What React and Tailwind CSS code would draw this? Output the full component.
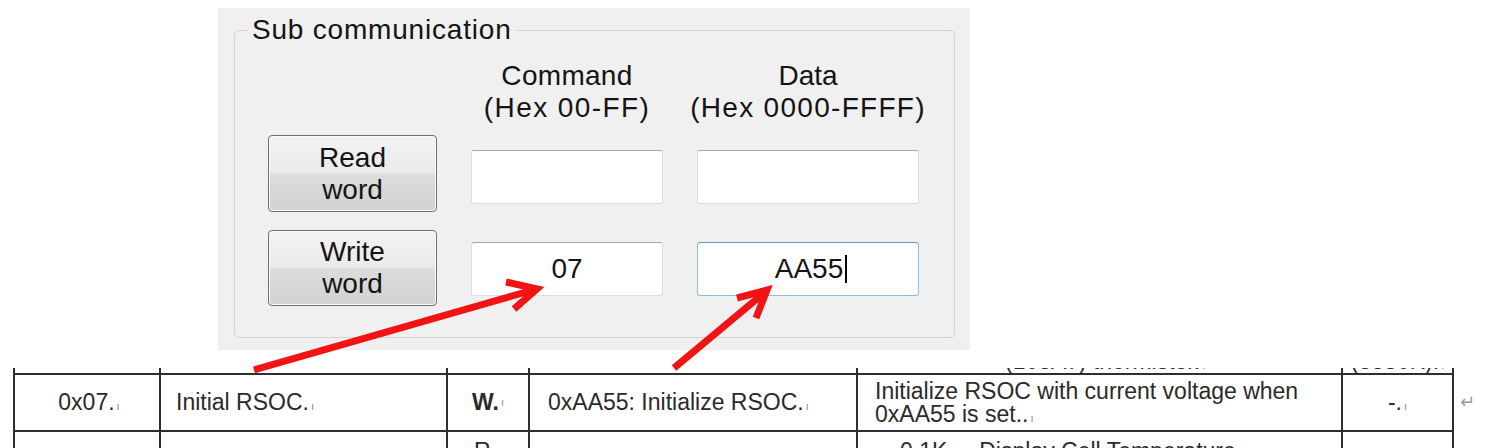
import React from "react";

function Mark() {
  return <span className="ml-[2px] text-[11px] leading-none text-[#8a8a8a]">ı</span>;
}

function Btn({ top, bottom, h }) {
  return (
    <div
      className={`${h} flex flex-col items-center justify-center rounded-[4px] border border-[#707070] bg-[linear-gradient(to_bottom,#f3f3f3_0%,#ebebeb_48%,#dcdcdc_52%,#d2d2d2_100%)] shadow-[inset_0_0_0_1px_#fafafa] text-[28px] leading-[32px]`}
    >
      <span>{top}</span>
      <span>{bottom}</span>
    </div>
  );
}

function Field({ children, focused }) {
  return (
    <div
      className={`h-[54px] flex items-center justify-center rounded-[3px] bg-white text-[28px] ${
        focused
          ? "border border-[#8cbbe6] border-t-[#5d97cf]"
          : "border border-[#dedede] border-t-[#a8a8a8]"
      }`}
    >
      {children}
    </div>
  );
}

const line = "border-[#2e2e2e]";

export default function App() {
  return (
    <div className="relative w-[1496px] h-[448px] overflow-hidden bg-white">
      {/* dialog panel */}
      <div className="pl-[218px] pt-[8px]">
        <div className="w-[752px] h-[342px] bg-[#f0f0f0] pt-[6px] pl-[16px] font-['Liberation_Sans',Arial,sans-serif] text-[#141414]">
          <fieldset className="w-[721px] h-[324px] rounded-[5px] border border-[#d3d3d3]">
            <legend className="ml-[13px] px-[4px] text-[28px] leading-[32px] tracking-[0.8px]">
              Sub communication
            </legend>
            <div className="pl-[33px] flex flex-col">
              <div className="mt-[14px] h-[64px] grid grid-cols-[169px_192px_222px] gap-x-[34px] text-[28px] leading-[32px]">
                <div />
                <div className="flex flex-col items-center">
                  <span className="tracking-[0.3px]">Command</span>
                  <span className="tracking-[1.4px] whitespace-nowrap">(Hex 00-FF)</span>
                </div>
                <div className="flex flex-col items-center">
                  <span>Data</span>
                  <span className="tracking-[1.3px] whitespace-nowrap">(Hex 0000-FFFF)</span>
                </div>
              </div>
              <div className="mt-[11px] grid grid-cols-[169px_192px_222px] gap-x-[34px] items-center">
                <Btn top="Read" bottom="word" h="h-[77px]" />
                <div className="mt-[6px]">
                  <Field />
                </div>
                <div className="mt-[6px]">
                  <Field />
                </div>
              </div>
              <div className="mt-[18px] grid grid-cols-[169px_192px_222px] gap-x-[34px] items-center">
                <Btn top="Write" bottom="word" h="h-[76px]" />
                <div className="mt-[2px]">
                  <Field>07</Field>
                </div>
                <div className="mt-[2px]">
                  <Field focused>
                    <span className="pl-[6px]">AA55</span>
                    <span className="ml-[2px] w-[2px] h-[28px] bg-black" />
                  </Field>
                </div>
              </div>
            </div>
          </fieldset>
        </div>
      </div>

      {/* document table (clipped) */}
      <div className="mt-[18px] h-[80px] overflow-hidden font-['Liberation_Sans',Arial,sans-serif] text-[23px] leading-[23px] text-[#2a2a2a]">
        <div className="-mt-[34px]">
          {/* previous row */}
          <div className="flex ml-[13px]">
            <div className={`flex w-[1441px] h-[39px] border-t-2 ${line}`}>
              <div className={`w-[146px] border-l-2 ${line}`} />
              <div className={`w-[287px] border-l-2 ${line}`} />
              <div className={`w-[82px] border-l-2 ${line}`} />
              <div className={`w-[328px] border-l-2 ${line}`} />
              <div className={`w-[485px] border-l-2 ${line} flex items-end pl-[147px]`}>
                <span className="whitespace-nowrap">(103AT) thermistor.<Mark /></span>
              </div>
              <div className={`w-[113px] border-l-2 border-r-2 ${line} flex items-end justify-center`}>
                <span className="whitespace-nowrap">(3380K).<Mark /></span>
              </div>
            </div>
          </div>
          {/* main row */}
          <div className="flex ml-[13px]">
            <div className={`flex w-[1441px] h-[57px] border-t-2 ${line}`}>
              <div className={`w-[146px] border-l-2 ${line} flex items-center justify-center pl-[4px]`}>
                <span>0x07.<Mark /></span>
              </div>
              <div className={`w-[287px] border-l-2 ${line} flex items-center pl-[15px]`}>
                <span>Initial RSOC.<Mark /></span>
              </div>
              <div className={`w-[82px] border-l-2 ${line} flex items-center justify-center`}>
                <span className="font-bold">W.</span>
                <Mark />
              </div>
              <div className={`w-[328px] border-l-2 ${line} flex items-center pl-[18px]`}>
                <span className="whitespace-nowrap">0xAA55: Initialize RSOC.<Mark /></span>
              </div>
              <div className={`w-[485px] border-l-2 ${line} flex items-center pl-[17px]`}>
                <span className="whitespace-nowrap">
                  Initialize RSOC with current voltage when
                  <br />
                  0xAA55 is set..<Mark />
                </span>
              </div>
              <div className={`w-[113px] border-l-2 border-r-2 ${line} flex items-center justify-center`}>
                <span>-.<Mark /></span>
              </div>
            </div>
            <span className="ml-[6px] self-center text-[18px] text-[#9a9a9a] font-['DejaVu_Sans',sans-serif]">↵</span>
          </div>
          {/* next row */}
          <div className="flex ml-[13px]">
            <div className={`flex w-[1441px] h-[60px] border-t-2 ${line}`}>
              <div className={`w-[146px] border-l-2 ${line}`} />
              <div className={`w-[287px] border-l-2 ${line}`} />
              <div className={`w-[82px] border-l-2 ${line} flex justify-center pt-[8px]`}>
                <span>R.<Mark /></span>
              </div>
              <div className={`w-[328px] border-l-2 ${line}`} />
              <div className={`w-[485px] border-l-2 ${line} pl-[42px] pt-[8px]`}>
                <span className="whitespace-pre">0.1K     Display Cell Temperature</span>
              </div>
              <div className={`w-[113px] border-l-2 border-r-2 ${line}`} />
            </div>
          </div>
        </div>
      </div>

      {/* annotation arrows */}
      <svg className="absolute left-0 top-0 pointer-events-none" width="1496" height="448">
        <g stroke="#f01414" strokeWidth="7" fill="none" strokeLinecap="butt" strokeLinejoin="miter">
          <line x1="254" y1="370" x2="533" y2="290" />
          <polyline points="506,282 537,289 514,309" />
          <line x1="674" y1="368" x2="764" y2="293" />
          <polyline points="737,298 767,290 756,318" />
        </g>
      </svg>
    </div>
  );
}
